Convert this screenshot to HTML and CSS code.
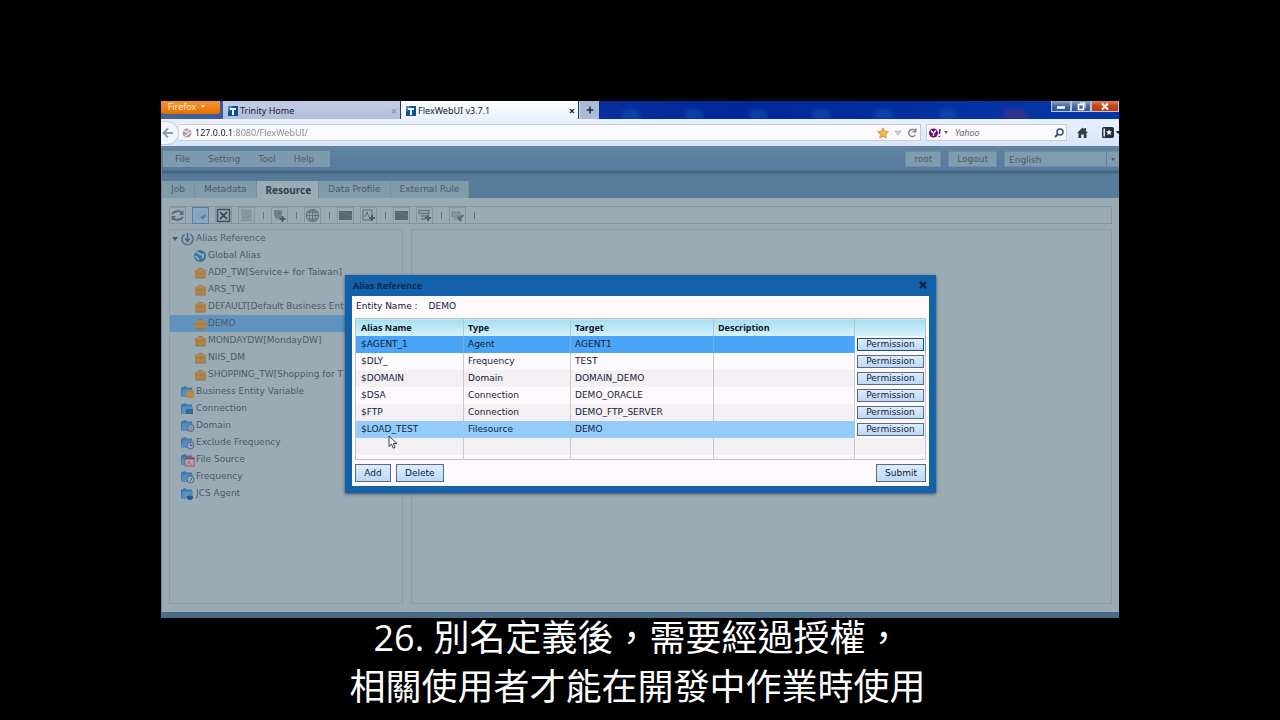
FILE: index.html
```html
<!DOCTYPE html>
<html lang="zh-Hant">
<head>
<meta charset="utf-8">
<title>FlexWebUI v3.7.1</title>
<link rel="stylesheet" href="styles.css">
</head>
<body>
<svg class="defs" aria-hidden="true">
  <defs>
    <symbol id="t-logo" viewBox="0 0 10 10"><rect width="10" height="10" fill="#0c4f9c"/><path d="M0 0h5L0 6z" fill="#3a8bd6"/><path d="M2 2h6v2H6v5H4V4H2z" fill="#fff"/></symbol>
    <symbol id="case" viewBox="0 0 13 12"><path d="M4.500 2.500V1.500h4v1" fill="none" stroke="#8a7452"/><rect x="1" y="2.500" width="11" height="8.500" rx="1" fill="#b18347"/><path d="M1 6h11" stroke="#a0783f" stroke-width=".8"/><path d="M1.500 11h10" stroke="#7d7766"/></symbol>
    <symbol id="folder" viewBox="0 0 15 14"><path d="M1 2.500L5 1l2 1.500h5V11H1z" fill="#3f78ab"/><path d="M3 4.500h10L12 12H1z" fill="#5590bd"/></symbol>
  </defs>
</svg>
<main class="screen">
  <header class="titlebar">
    <button class="firefox">Firefox <i class="down"></i></button>
    <div class="btab"><svg class="i10"><use href="#t-logo"/></svg><span>Trinity Home</span><button class="x dim" aria-label="Close tab">×</button></div>
    <div class="btab on"><svg class="i10"><use href="#t-logo"/></svg><span>FlexWebUI v3.7.1</span><button class="x" aria-label="Close tab">×</button></div>
    <button class="plus" aria-label="New tab"><svg viewBox="0 0 8 8" width="8" height="8"><path d="M4 0.500v7M0.500 4h7" stroke="#26313f" stroke-width="1.600"/></svg></button>
    <div class="desktop"><i></i><i></i><i></i><i></i><i></i><i></i><i class="red"></i></div>
    <div class="wins">
      <button aria-label="Minimize"><svg viewBox="0 0 12 9" width="12" height="9"><path d="M2 5.500h8" stroke="#fff" stroke-width="2.500"/></svg></button>
      <button aria-label="Restore"><svg viewBox="0 0 12 9" width="12" height="9"><rect x="3.500" y="2.500" width="5" height="5" fill="none" stroke="#fff" stroke-width="1.600"/><path d="M5 1h5v5" fill="none" stroke="#fff"/></svg></button>
      <button class="close" aria-label="Close"><svg viewBox="0 0 12 9" width="12" height="9"><path d="M3 1.500l6 6M9 1.500l-6 6" stroke="#fff" stroke-width="2"/></svg></button>
    </div>
  </header>
  <div class="navbar">
    <button class="back" aria-label="Back"><svg viewBox="0 0 12 12" width="12" height="12"><path d="M11 6H2M6 1.500L1.500 6 6 10.500" fill="none" stroke="#8f9ab0" stroke-width="2"/></svg></button>
    <div class="address">
      <svg viewBox="0 0 10 10" width="10" height="10"><circle cx="5" cy="5" r="4.500" fill="#a8a0a4"/><path d="M1 3c3-1 2 2 4 1s0-3 3-2M3 9c0-3 3-1 3-3s2-1 3-1" fill="none" stroke="#efe9ec" stroke-width="1.200"/></svg>
      <input class="url" aria-label="Address" value="127.0.0.1:8080/FlexWebUI/">
      <svg viewBox="0 0 12 12" width="12" height="12"><path d="M6 0.800l1.600 3.400 3.700.5-2.700 2.600.7 3.700L6 9.200 2.700 11l.7-3.700L.7 4.700l3.700-.5z" fill="#f6b344" stroke="#cf8a3c" stroke-width=".8"/></svg>
      <svg viewBox="0 0 8 6" width="8" height="6"><path d="M1 1h6L4 5z" fill="#d3d0d8" stroke="#aaa7b2" stroke-width=".7"/></svg>
      <svg viewBox="0 0 10 10" width="10" height="10"><path d="M8 2.500A3.600 3.600 0 1 0 8.300 7M8.800 0.500v3.300H5.500" fill="none" stroke="#77777f" stroke-width="1.300"/></svg>
    </div>
    <div class="search">
      <svg viewBox="0 0 13 10" width="13" height="10"><circle cx="4.500" cy="5" r="4.500" fill="#6a1274"/><path d="M2 2.500L4.500 5.500 7 2.500M4.500 5v3" fill="none" stroke="#fff" stroke-width="1.300"/><path d="M11 1l-.7 5M10.300 8v1" stroke="#6a1274" stroke-width="1.600"/></svg>
      <i class="down grey"></i>
      <input placeholder="Yahoo" aria-label="Search">
      <svg viewBox="0 0 10 10" width="10" height="10"><circle cx="6" cy="4" r="3" fill="none" stroke="#33517e" stroke-width="1.500"/><path d="M4 6L1 9" stroke="#33517e" stroke-width="2"/></svg>
    </div>
    <button aria-label="Home"><svg viewBox="0 0 11 11" width="11" height="11"><path d="M0 6L5.500 0.500 7.500 2.500V1H9v3l2 2H9.500v5H6.800V7.500H4.200V11H1.500V6z" fill="#333c4c"/></svg></button>
    <button class="marks" aria-label="Bookmarks"><svg viewBox="0 0 12 11" width="12" height="11"><rect x=".7" y=".7" width="10.600" height="9.600" rx="1" fill="#dfe5ee" stroke="#262f3e" stroke-width="1.400"/><rect x="3" y="1" width="8" height="9" fill="#262f3e"/><path d="M7 2.500l.9 1.800 2 .2-1.500 1.400.4 2L7 7l-1.800.9.4-2L4.100 4.500l2-.2z" fill="#fff"/></svg></button>
    <i class="down dark"></i>
  </div>

  <section class="app">
    <div class="menubar">
      <nav class="menu"><button>File</button><button>Setting</button><button>Tool</button><button>Help</button></nav>
      <div class="user">
        <button>root</button><button>Logout</button>
        <label class="lang"><select aria-label="Language"><option>English</option></select><i class="down"></i></label>
      </div>
    </div>
    <nav class="tabs"><div><button>Job</button><button>Metadata</button><button class="on">Resource</button><button>Data Profile</button><button>External Rule</button></div></nav>
    <div class="body">
      <div class="toolbar">
        <button aria-label="Refresh"><svg viewBox="0 0 15 15"><path d="M2 6c2-3 8-4 10-1M13 9c-2 3-8 4-10 1" fill="none" stroke="#4e5e68" stroke-width="1.800"/><path d="M13.500 2v5H9zM1.500 13V8H6z" fill="#4e5e68"/></svg></button>
        <button class="hot" aria-label="Edit"><svg viewBox="0 0 15 15"><rect x="2" y="3" width="11" height="9" fill="#85a4bd"/><path d="M8 9l2 1 2-3" fill="none" stroke="#416d95" stroke-width="1.800"/></svg></button>
        <button aria-label="Delete"><svg viewBox="0 0 15 15"><rect x="1.500" y="1.500" width="12" height="12" fill="none" stroke="#303e48" stroke-width="1.500"/><path d="M4 4l7 7M11 4l-7 7" stroke="#303e48" stroke-width="1.800"/></svg></button>
        <button aria-label="Copy"><svg viewBox="0 0 15 15"><rect x="3" y="2" width="9" height="9" fill="#8797a0" stroke="#7c8d97"/><path d="M5 4.500h5M5 6.500h5M5 8.500h5M1 12.500h13" stroke="#7c8d97"/></svg></button>
        <hr>
        <button aria-label="Add alias"><svg viewBox="0 0 15 15"><path d="M2 2h8v5H2z" fill="#6d7f89"/><circle cx="6" cy="7" r="3.500" fill="#647681"/><path d="M3 11h5M3 5c2-1 4 3 6 1" stroke="#7f909a"/><path d="M10.500 8v6M7.500 11h6" stroke="#3f4f59" stroke-width="2"/></svg></button>
        <hr>
        <button aria-label="Global"><svg viewBox="0 0 15 15"><circle cx="7.500" cy="7.500" r="6" fill="none" stroke="#566973" stroke-width="1.200"/><path d="M1.500 7.500h12M3 4h9M3 11h9M7.500 1.500v12M7.500 1.500c-4 3-4 9 0 12 4-3 4-9 0-12" fill="none" stroke="#566973"/></svg></button>
        <hr>
        <button aria-label="Folder"><svg viewBox="0 0 15 15"><path d="M1 3h13v9H1z" fill="#4c5d67"/><path d="M3 4l10 3" stroke="#627580"/></svg></button>
        <button aria-label="Add file"><svg viewBox="0 0 15 15"><rect x="2" y="2" width="9" height="10" fill="none" stroke="#52646e"/><path d="M4 9l2-5 2 5" fill="none" stroke="#52646e"/><path d="M11 7v6M8 10h6" stroke="#3f4f59" stroke-width="2"/></svg></button>
        <hr>
        <button aria-label="Folder"><svg viewBox="0 0 15 15"><path d="M1 3h13v9H1z" fill="#4c5d67"/><path d="M3 4l10 3" stroke="#627580"/></svg></button>
        <button aria-label="Add list"><svg viewBox="0 0 15 15"><path d="M2 2.500h10v3H2zM4 8h6M4 11h4" fill="none" stroke="#607079" stroke-width="1.300"/><path d="M11 7v6M8 10h6" stroke="#46565f" stroke-width="2"/></svg></button>
        <hr>
        <button aria-label="Connect"><svg viewBox="0 0 15 15"><path d="M2 4h8v5H2zM4 11h5" fill="#83939c" stroke="#6f808a"/><path d="M9 12l4-5M8 9l3 4" stroke="#46565f" stroke-width="2"/></svg></button>
        <hr>
      </div>
      <div class="panes">
        <aside class="tree">
          <ul>
            <li><i class="down"></i><svg viewBox="0 0 15 15"><path d="M4.500 2.500a6 6 0 1 0 6 0" fill="none" stroke="#5b7189" stroke-width="1.800"/><path d="M7.500 1v8M5 7l2.500 3L10 7" fill="none" stroke="#3f68a0" stroke-width="1.600"/></svg>Alias Reference</li>
            <li class="sub"><svg class="globe" viewBox="0 0 15 15"><circle cx="7.500" cy="7.500" r="6.500" fill="#41739c"/><path d="M3 4c4-2 3 3 6 2s2 2 1 4M2 8c3 0 3 2 4 4" fill="none" stroke="#8db0c9" stroke-width="1.800"/></svg>Global Alias</li>
            <li class="sub"><svg><use href="#case"/></svg>ADP_TW[Service+ for Taiwan]</li>
            <li class="sub"><svg><use href="#case"/></svg>ARS_TW</li>
            <li class="sub"><svg><use href="#case"/></svg>DEFAULT[Default Business Ent</li>
            <li class="sub sel"><svg><use href="#case"/></svg>DEMO</li>
            <li class="sub"><svg><use href="#case"/></svg>MONDAYDW[MondayDW]</li>
            <li class="sub"><svg><use href="#case"/></svg>NIIS_DM</li>
            <li class="sub"><svg><use href="#case"/></svg>SHOPPING_TW[Shopping for T</li>
            <li class="top"><svg viewBox="0 0 15 14"><use href="#folder"/><rect x="6" y="5" width="8" height="8" rx="1" fill="#aa8a50"/></svg>Business Entity Variable</li>
            <li class="top"><svg viewBox="0 0 15 14"><use href="#folder"/><path d="M6 7h7v5H6z" fill="#2f6899"/></svg>Connection</li>
            <li class="top"><svg viewBox="0 0 15 14"><use href="#folder"/><circle cx="10.500" cy="9" r="3.500" fill="#8199ae" stroke="#50708c"/></svg>Domain</li>
            <li class="top"><svg viewBox="0 0 15 14"><use href="#folder"/><circle cx="10.500" cy="9.500" r="3.500" fill="#93a2bd" stroke="#54638b"/><path d="M10.500 7.500v2h2" fill="none" stroke="#913f5a"/></svg>Exclude Frequency</li>
            <li class="top"><svg viewBox="0 0 15 14"><use href="#folder"/><rect x="5" y="5" width="9" height="8" fill="#b3acba" stroke="#a15266"/><path d="M5 5.500h9" stroke="#a23e52" stroke-width="2"/><path d="M7 12l2-4 2 4" fill="none" stroke="#a15266"/></svg>File Source</li>
            <li class="top"><svg viewBox="0 0 15 14"><use href="#folder"/><circle cx="10.500" cy="9.500" r="3.500" fill="#9eb0bd" stroke="#4d6478"/><path d="M10 11l2-3" stroke="#3d5468"/></svg>Frequency</li>
            <li class="top"><svg viewBox="0 0 15 14"><use href="#folder"/><circle cx="10" cy="10" r="3" fill="#225a96"/><path d="M5 8h9" stroke="#7fa8c9"/></svg>JCS Agent</li>
          </ul>
        </aside>
        <div class="main"></div>
      </div>
    </div>

    <div class="overlay">
      <div class="dialog" role="dialog" aria-labelledby="dlg-title">
        <div class="dlg-head"><h2 id="dlg-title">Alias Reference</h2><button aria-label="Close"><svg viewBox="0 0 8 8" width="8" height="8"><path d="M1 1l6 6M7 1L1 7" stroke="#0a2345" stroke-width="2.400"/></svg></button></div>
        <div class="panel">
          <p class="entity"><span>Entity Name :</span><span>DEMO</span></p>
          <table>
            <colgroup><col class="c1"><col class="c2"><col class="c3"><col class="c4"><col class="c5"></colgroup>
            <thead><tr><th>Alias Name</th><th>Type</th><th>Target</th><th>Description</th><th></th></tr></thead>
            <tbody>
              <tr class="active"><td>$AGENT_1</td><td>Agent</td><td>AGENT1</td><td></td><td class="act"><button>Permission</button></td></tr>
              <tr><td>$DLY_</td><td>Frequency</td><td>TEST</td><td></td><td class="act"><button>Permission</button></td></tr>
              <tr class="alt"><td>$DOMAIN</td><td>Domain</td><td>DOMAIN_DEMO</td><td></td><td class="act"><button>Permission</button></td></tr>
              <tr><td>$DSA</td><td>Connection</td><td>DEMO_ORACLE</td><td></td><td class="act"><button>Permission</button></td></tr>
              <tr class="alt"><td>$FTP</td><td>Connection</td><td>DEMO_FTP_SERVER</td><td></td><td class="act"><button>Permission</button></td></tr>
              <tr class="hover"><td>$LOAD_TEST</td><td>Filesource</td><td>DEMO</td><td></td><td class="act"><button>Permission</button></td></tr>
              <tr class="alt blank"><td></td><td></td><td></td><td></td><td></td></tr>
            </tbody>
          </table>
          <div class="actions"><button>Add</button><button>Delete</button><button class="submit">Submit</button></div>
        </div>
        <svg class="cursor" viewBox="0 0 10 14" width="10" height="14"><path d="M1 1v10.500l2.500-2.300 1.800 4 1.800-.8-1.800-3.900H9z" fill="#f4f4f8" stroke="#3b4252"/></svg>
      </div>
    </div>
  </section>
</main>
<footer class="caption"><span>26. 別名定義後，需要經過授權，</span><span>相關使用者才能在開發中作業時使用</span></footer>
</body>
</html>
```
FILE: styles.css
```css
* { box-sizing: border-box; }
body {
  margin: 0;
  min-height: 100vh;
  padding-top: 101px;
  display: flex;
  flex-direction: column;
  background: #000;
  font: 9px/17px "DejaVu Sans", Verdana, sans-serif;
  color: #111c30;
}
button, input, select { font: inherit; color: inherit; margin: 0; padding: 0; border: 0; background: none; }
button { display: flex; align-items: center; justify-content: center; white-space: nowrap; }
input { min-width: 0; outline: 0; }
svg { display: block; flex: none; }
.defs { position: absolute; width: 0; height: 0; }
.down { width: 0; height: 0; flex: none; border: 3px solid transparent; border-top: 4px solid; border-bottom: 0; }
.down.grey { border-width: 2px; border-top-width: 3px; border-bottom: 0; color: #666; }
.down.dark { border-width: 2px; border-top-width: 3px; border-bottom: 0; color: #222; }

.screen {
  flex: 1;
  margin: 0 calc(12.5% + 1px);
  display: flex;
  flex-direction: column;
  overflow: hidden;
}

.titlebar, .navbar { font-family: "Noto Sans", "Segoe UI", sans-serif; display: flex; }
.titlebar { height: 18px; line-height: 15px; background: linear-gradient(90deg, #46639a, #082f9c 45%, #01289a 60%, #0637a8); }
.firefox { width: 59px; height: 13px; margin-right: 3px; gap: 5px; padding: 0 8px 2px 0; color: #ffe9d0; background: linear-gradient(#ee9440, #f08010 60%, #e07000); border-radius: 0 0 3px 3px; }
.firefox .down { border-width: 2px; border-top-width: 3px; border-bottom: 0; }
.i10 { width: 10px; height: 10px; }
.btab { width: 178px; height: 18px; padding: 1px 3px 0 5px; display: flex; align-items: center; gap: 2px; background: linear-gradient(#c4cde6, #b2bedb); border-right: 1px solid #26385e; white-space: nowrap; }
.btab.on { background: linear-gradient(#fdfeff, #eaf0fc); }
.x { margin-left: auto; font-size: 11px; font-weight: 700; }
.x.dim { color: #8e97ac; }
.plus { width: 20px; background: #a9bbd6; border-left: 1px solid #cdd9ea; }
.desktop { flex: 1; display: flex; justify-content: space-around; align-items: flex-end; overflow: hidden; }
.desktop i { width: 18px; height: 10px; border-radius: 6px 8px 0 0; background: #1c62bd; opacity: .4; filter: blur(2px); }
.desktop .red { background: #713169; width: 26px; }
.wins { display: flex; align-items: flex-start; }
.wins button { width: 20px; height: 11px; background: linear-gradient(#91a5c9, #4c699f 50%, #35558f); border: 1px solid #b7c5e0; border-top: 0; }
.wins .close { width: 28px; background: linear-gradient(#dd8266, #c64317 50%, #b83c10); }
.navbar { height: 27px; align-items: center; background: linear-gradient(#e9f0fc, #d7e5f8); }
.back { width: 18px; height: 24px; padding-right: 4px; border-radius: 0 12px 12px 0; background: #f1f4fb; border: 1px solid #c5cde0; border-left: 0; }
.address, .search { height: 17px; display: flex; align-items: center; background: #fcf9fe; border: 1px solid #c3cde0; }
.address { flex: 1; gap: 5px; padding: 0 3px; border-left: 0; }
.url { flex: 1; margin-left: -2px; height: 15px; color: transparent; background: linear-gradient(90deg, #1e1e26 38px, #89868e 38px); background-clip: text; -webkit-background-clip: text; }
.search { width: 141px; margin: 0 10px 0 5px; gap: 2px; padding: 0 2px; }
.search input { flex: 1; margin-left: 5px; }
.search input::placeholder { color: #67666f; font-style: italic; opacity: 1; }
.marks { margin: 0 2px 0 14px; }
.navbar .dark { margin-right: -1px; }

.app { flex: 1; position: relative; display: flex; flex-direction: column; border-left: 1px solid #6a8294; color: #4a5b68; background: #9aabb4; border-bottom: 6px solid #476c8a; }
.menubar { height: 28px; padding: 5px 0 0 1px; display: flex; justify-content: space-between; align-items: flex-start; background: linear-gradient(#64859f, #587b9f 60%, #587b9f 24px, #446482 25px, #4b6c89); }
.menu { display: flex; height: 16px; padding: 0 7px 0 3px; background: #7d9aae; }
.menu button { padding: 0 9px; }
.user { display: flex; gap: 7px; }
.user button, .lang { height: 16px; background: #809db0; border: 1px solid #6f8ea5; }
.user button { padding: 0 8px; }
.lang { width: 115px; display: flex; align-items: center; border-right: 0; }
.lang select { flex: 1; height: 14px; padding-left: 4px; appearance: none; border-right: 1px solid #64808f; }
.lang .down { margin: 0 4px; border-width: 2px; border-top-width: 3px; border-bottom: 0; }
.tabs { height: 24px; padding-top: 7px; background: #587b99; display: flex; }
.tabs div { display: flex; background: #809cab; }
.tabs button { padding: 0 9px; border-right: 1px solid #7491a2; }
.tabs .on { height: 18px; padding: 0 7px 0 9px; font-family: "Noto Sans", sans-serif; font-size: 10px; font-weight: 700; color: #2f414f; background: #9aadb7; }
.body { flex: 1; padding: 8px 7px; display: flex; flex-direction: column; gap: 5px; }
.toolbar { height: 18px; display: flex; align-items: center; gap: 6px; border: 1px solid #84959f; }
.toolbar button { width: 17px; height: 17px; margin: 0 0 0 -1px; border: 1px solid #8496a0; }
.toolbar button + button { margin-left: 0; }
.toolbar button svg { width: 15px; height: 15px; opacity: .85; }
.toolbar .hot { background: #8aa8c0; border-color: #5d7c98; }
.toolbar hr { width: 1px; height: 7px; margin: 0 2px; border: 0; background: #637580; }
.panes { flex: 1; display: flex; gap: 8px; }
.tree, .main { border: 1px solid #8c9da7; }
.tree { width: 234px; overflow: hidden; }
.main { flex: 1; }
.tree ul { margin: 0; padding: 0; list-style: none; }
.tree li { height: 17px; display: flex; align-items: center; gap: 1px; padding-left: 2px; white-space: nowrap; }
.tree li svg { width: 15px; height: 14px; margin-left: 1px; }
.tree .top { padding-left: 9px; }
.tree .sub { padding-left: 23px; }
.tree .sub svg { width: 13px; height: 12px; }
.tree .sub .globe { width: 14px; height: 14px; margin-left: 0; }
.tree .sel { background: #5f93bf; }

.overlay { position: absolute; inset: 0; padding-top: 10px; display: grid; place-items: center; }
.dialog { position: relative; width: 591px; padding: 0 7px 7px; background: #1361a8; box-shadow: 0 1px 3px #35495a; color: #14213a; }
.dlg-head { height: 21px; display: flex; align-items: center; justify-content: space-between; padding: 0 2px 1px 1px; }
.dlg-head h2 { margin: 0; font: 700 9px/17px "Noto Sans", sans-serif; color: #0a2c5c; }
.panel { padding: 2px 3px 4px; background: #fdf9fc; }
.entity { margin: 0; height: 20px; padding-left: 1px; display: flex; gap: 11px; }
table { width: 100%; border-collapse: collapse; table-layout: fixed; border: 1px solid #b9c3cf; }
.c1 { width: 108px; } .c2 { width: 107px; } .c3 { width: 143px; } .c5 { width: 71px; }
tr { height: 17px; }
th, td { height: 17px; padding: 0 0 0 5px; line-height: 15px; text-align: left; border-right: 1px solid #c9c9d3; white-space: nowrap; }
th + th, td + td { padding-left: 4px; }
th { font-family: "Noto Sans", sans-serif; font-weight: 700; color: #0b1828; background: linear-gradient(#a5def2, #d9f2fa); border-color: #a7c9d9; }
.alt td { background: #f3eff2; }
.active td { background: #4ca4f6; border-color: #6cb2f2; }
.hover td { background: #93ccfa; border-color: #a5c8e4; }
tr td.act { padding: 0 1px 0 2px; background: #fdf9fc; }
.blank td { height: 22px; background: linear-gradient(#f3eff2 17px, #fdf9fc 17px); }
.act button { width: 100%; height: 13px; line-height: 11px; }
.act button, .actions button { color: #14213a; background: linear-gradient(#dcecfb, #bcd8f4); border: 1px solid #596a86; }
.active .act button { border-color: #1d4f86; }
.actions { display: flex; gap: 5px; padding-top: 4px; }
.actions button { height: 18px; min-width: 36px; padding: 0 8px; }
.actions .submit { margin-left: auto; }
.cursor { position: absolute; left: 43px; top: 160px; }

.caption { height: 102px; display: flex; flex-direction: column; align-items: center; gap: 9px; padding-right: 5px; color: #fff; font: 400 36px/40px "Open Sans", "Noto Sans CJK TC", sans-serif; white-space: nowrap; }
```
